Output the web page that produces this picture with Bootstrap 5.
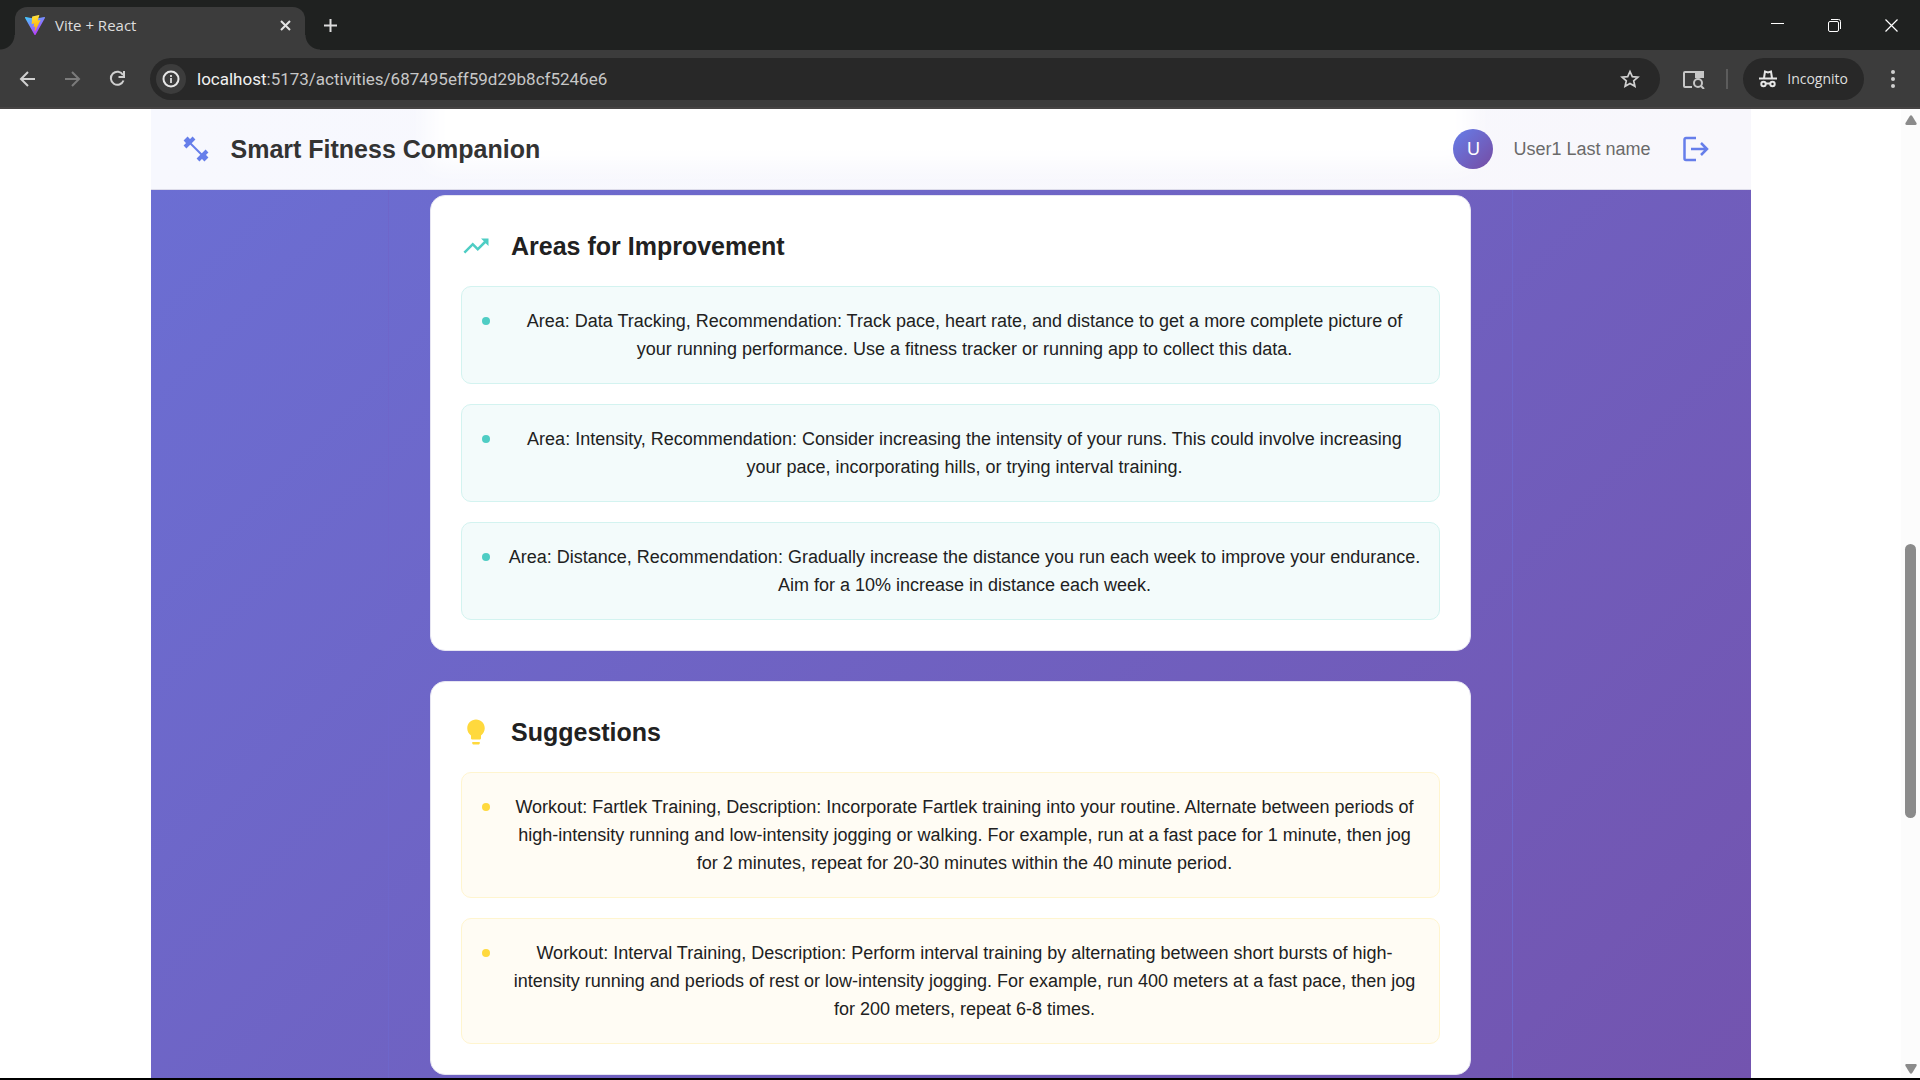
<!DOCTYPE html>
<html lang="en">
<head>
<meta charset="utf-8">
<meta name="viewport" content="width=device-width, initial-scale=1">
<title>Vite + React</title>
<link href="https://cdn.jsdelivr.net/npm/bootstrap@5.3.0/dist/css/bootstrap.min.css" rel="stylesheet">
<style>
  body { font-family: "Liberation Sans", Arial, sans-serif; font-size: 18px; line-height: 28px; color: #212121; background: #000; }
  svg { display: block; flex: none; }
  button { background: none; border: 0; padding: 0; color: inherit; }
  .screen { height: 100vh; border-bottom: 2px solid #000; }

  /* browser frame */
  .chrome { font-family: "Open Sans", "Noto Sans", sans-serif; color: #dedede; flex: none; }
  .tabstrip { height: 50px; background: #1f2120; padding-left: 15px; }
  .tab { width: 290px; height: 43px; background: #3c3c3c; border-radius: 12px 12px 0 0; padding: 0 12px 7px 10px; gap: 10px; font-size: 15px; line-height: 20px; position: relative; }
  .tab::before, .tab::after { content: ""; position: absolute; bottom: 0; width: 15px; height: 15px; }
  .tab::before { right: 100%; background: radial-gradient(circle at 0 0, #0000 14px, #3c3c3c 15px); }
  .tab::after { left: 100%; background: radial-gradient(circle at 100% 0, #0000 14px, #3c3c3c 15px); }
  .new-tab { margin: 0 0 0 18px; }
  .window-buttons { gap: 42px; padding-right: 21px; }
  .toolbar { height: 59px; background: #3c3c3c; border-bottom: 2px solid #464444; padding: 0 22px 0 18px; }
  .nav-buttons { gap: 25px; }
  .omnibox { height: 42px; background: #282828; border-radius: 21px; padding: 0 20px 0 6px; margin-left: 22px; }
  .site-info { width: 30px; height: 30px; background: #3c3c3c; }
  .address { font-family: Roboto, "Open Sans", sans-serif; color: #c7c7c7; font-size: 17px; line-height: 24px; padding-left: 11px; }
  .address b { font-weight: 400; color: #f0f0f0; }
  .side-search { margin: 0 21px 0 23px; }
  .separator { width: 2px; height: 20px; background: #5c5c5c; margin-right: 15px; }
  .incognito { height: 42px; background: #282828; border-radius: 21px; padding: 0 16px; gap: 10px; font-size: 14px; line-height: 20px; }

  /* page */
  .viewport { background: #fff; min-height: 0; }
  .app { max-width: 1600px; background: linear-gradient(135deg, #6b6fd4, #7354af); overflow: hidden; }
  .app-header { height: 81px; flex: none; background: linear-gradient(90deg, #f7f8fe, #f8f7fc); border-bottom: 1px solid #dddcea; padding: 0 30px; overflow: hidden; position: relative; }
  .app-header::before { content: ""; position: absolute; top: -40px; bottom: 24px; left: 0; right: 0; margin: auto; width: 1041px; background: #fff; filter: blur(12px); }
  .app-header > * { position: relative; }
  .brand { font-size: 25px; line-height: 40px; font-weight: 700; color: #333; gap: 20px; margin: 0; }
  .accent { color: #667eea; }
  .user { gap: 20px; color: #6a6a6a; }
  .avatar { width: 40px; height: 40px; background: linear-gradient(135deg, #667eea, #764ba2); color: #fff; }
  .logout { padding: 10px; }
  .content { width: 100%; max-width: 1125px; padding: 5px 41px 0; gap: 30px; border: solid #6e66ca; border-width: 0 1px; overflow: hidden; min-height: 0; }
  .panel { background: #fff; border: 1px solid #e6e5f2; border-radius: 15px; padding: 30px; flex: none; }
  .panel-title { font-size: 25px; line-height: 40px; font-weight: 700; gap: 20px; margin: 0 0 20px; }
  .tips { gap: 20px; margin: 0; }
  .tip { border: 1px solid; border-radius: 10px; padding: 20px 18px 20px 20px; gap: 18px; text-align: center; }
  .tip::before { content: ""; flex: none; width: 8px; height: 8px; border-radius: 50%; margin-top: 10px; background: currentColor; }
  .tip span { flex: 1; color: #212121; }
  .teal { color: #4ecdc4; }
  .teal .tip { background: #f3fbfb; border-color: #d3f3f0; }
  .sun { color: #ffd93d; }
  .sun .tip { background: #fffcf4; border-color: #fff5cf; }
  .scroll-rail { width: 19px; flex: none; background: #fcfcfc; padding: 6px 0 4px; color: #8b8b8b; }
  .thumb { width: 11px; border-radius: 6px; background: #8b8b8b; }
</style>
<script src="https://cdn.jsdelivr.net/npm/bootstrap@5.3.0/dist/js/bootstrap.bundle.min.js"></script>
</head>
<body>
<div class="screen d-flex flex-column overflow-hidden">
  <div class="chrome">
    <div class="tabstrip d-flex">
      <div class="tab d-flex align-items-center align-self-end">
        <svg width="20" height="20" viewBox="0 0 32 32" aria-hidden="true">
          <defs>
            <linearGradient id="v1" x1="0" y1="0" x2=".6" y2="1"><stop offset="0" stop-color="#41d1ff"/><stop offset="1" stop-color="#bd34fe"/></linearGradient>
            <linearGradient id="v2" x1=".4" y1="0" x2=".5" y2="1"><stop offset="0" stop-color="#ffea83"/><stop offset=".1" stop-color="#ffdd35"/><stop offset="1" stop-color="#ffa800"/></linearGradient>
          </defs>
          <path fill="url(#v1)" d="M31.9 4.7 16.9 31.500a1 1 0 0 1-1.800 0L.1 4.700a1 1 0 0 1 1-1.500L16 5.900l14.900-2.700a1 1 0 0 1 1 1.500z"/>
          <path fill="url(#v2)" d="M22.500.1 11.700 2.200a.5.5 0 0 0-.3.400l-.7 11.300a.4.4 0 0 0 .5.400l3-.7a.4.4 0 0 1 .5.500l-.9 4.400a.4.4 0 0 0 .5.500l1.900-.6a.4.4 0 0 1 .5.500l-1.400 6.900c-.1.400.5.700.7.300l8.600-17.500a.4.4 0 0 0-.5-.6l-3.200.6a.4.4 0 0 1-.4-.5L22.900.6a.4.4 0 0 0-.4-.5z"/>
        </svg>
        <span>Vite + React</span>
        <button class="ms-auto" aria-label="Close tab"><svg width="15" height="15" viewBox="0 0 15 15" stroke="#e3e3e3" stroke-width="2"><path d="M3 3l9 9M12 3l-9 9"/></svg></button>
      </div>
      <button class="new-tab" aria-label="New tab"><svg width="15" height="15" viewBox="0 0 15 15" stroke="#dcdcdc" stroke-width="2"><path d="M7.500 1v13M1 7.500h13"/></svg></button>
      <div class="window-buttons d-flex align-items-center ms-auto">
        <button aria-label="Minimize"><svg width="15" height="15" viewBox="0 0 15 15" stroke="#fff"><path d="M1 5.500h13"/></svg></button>
        <button aria-label="Restore"><svg width="15" height="15" viewBox="0 0 15 15" fill="none" stroke="#fff"><rect x="1.500" y="3.500" width="10" height="10" rx="1.500"/><path d="M4 1.500h7.500a2 2 0 0 1 2 2V11"/></svg></button>
        <button aria-label="Close"><svg width="15" height="15" viewBox="0 0 15 15" stroke="#fff" stroke-width="1.200"><path d="M1.500 1.500l12 12M13.500 1.500l-12 12"/></svg></button>
      </div>
    </div>
    <div class="toolbar d-flex align-items-center">
      <div class="nav-buttons d-flex">
        <button aria-label="Back"><svg width="20" height="20" viewBox="0 0 20 20" fill="none" stroke="#d0d0d0" stroke-width="2"><path d="M17 10H3M10 3l-7 7 7 7"/></svg></button>
        <button aria-label="Forward"><svg width="20" height="20" viewBox="0 0 20 20" fill="none" stroke="#7b7b7b" stroke-width="2"><path d="M2 10h14M9 3l7 7-7 7"/></svg></button>
        <button aria-label="Reload"><svg width="20" height="20" viewBox="0 0 20 20" fill="none" stroke="#d0d0d0" stroke-width="2"><path d="M15 6A6.500 6.500 0 1 0 15.500 11.500M16 2v6H10.500"/></svg></button>
      </div>
      <div class="omnibox d-flex align-items-center flex-grow-1">
        <button class="site-info rounded-circle d-flex align-items-center justify-content-center" aria-label="Site information"><svg width="18" height="18" viewBox="0 0 18 18" fill="none" stroke="#e6e6e6" stroke-width="2"><circle cx="9" cy="9" r="7.500"/><path d="M9 8v5M9 5v2" stroke-width="1.700"/></svg></button>
        <div class="address flex-grow-1" role="textbox" aria-label="Address"><b>localhost</b>:5173/activities/687495eff59d29b8cf5246e6</div>
        <button aria-label="Bookmark"><svg width="20" height="20" viewBox="0 0 20 20" fill="none" stroke="#d0d0d0" stroke-width="1.700"><path d="M10 2.500l2.300 5.100 5.600.5-4.200 3.700 1.200 5.500L10 14.400l-4.900 2.900 1.200-5.500L2.100 8.100l5.600-.5z"/></svg></button>
      </div>
      <button class="side-search" aria-label="Search side panel"><svg width="22" height="20" viewBox="0 0 22 20" fill="none" stroke="#c7c7c7" stroke-width="2"><path d="M9 18H2a1 1 0 0 1-1-1V4a1 1 0 0 1 1-1h18v5"/><path fill="#c7c7c7" stroke="none" d="M12 2h8a1 1 0 0 1 1 1v6h-9z"/><circle cx="15" cy="14" r="4"/><path d="M18 17l3 3"/></svg></button>
      <div class="separator"></div>
      <button class="incognito d-flex align-items-center" aria-label="Incognito"><svg width="18" height="20" viewBox="0 0 18 20" fill="none" stroke="#e6e6e6" stroke-width="2"><path d="M0 9.500h18M5 9l1-6.500 3 1 3-1L13 9"/><circle cx="4.500" cy="15" r="2.200"/><circle cx="13.500" cy="15" r="2.200"/><path d="M6.500 14.500h5"/></svg><span>Incognito</span></button>
      <button class="ms-4" aria-label="Menu"><svg width="10" height="20" viewBox="0 0 10 20" fill="#d0d0d0"><circle cx="5" cy="3" r="2"/><circle cx="5" cy="10" r="2"/><circle cx="5" cy="17" r="2"/></svg></button>
    </div>
  </div>

  <div class="viewport d-flex flex-grow-1">
    <div class="flex-grow-1 d-flex justify-content-center">
      <div class="app w-100 d-flex flex-column align-items-center">
        <header class="app-header w-100 d-flex align-items-center justify-content-between">
          <h1 class="brand d-flex align-items-center">
            <svg class="accent" width="30" height="30" viewBox="0 0 30 30" stroke="currentColor" fill="none" aria-hidden="true"><path stroke-width="2" d="M8 8l14 14"/><path stroke-width="4" d="M4 13L13 4M17 26l9-9"/><path stroke-width="4" d="M4 8l4-4M22 26l4-4"/></svg>
            <span>Smart Fitness Companion</span>
          </h1>
          <div class="user d-flex align-items-center">
            <div class="avatar rounded-circle d-flex align-items-center justify-content-center">U</div>
            <span>User1 Last name</span>
            <button class="logout accent" aria-label="Log out"><svg width="30" height="30" viewBox="0 0 30 30" fill="none" stroke="currentColor" stroke-width="2.500"><path d="M15 4H5a1.500 1.500 0 0 0-1.500 1.500v19A1.500 1.500 0 0 0 5 26h10M10 15h16M20 9l6 6-6 6"/></svg></button>
          </div>
        </header>
        <main class="content d-flex flex-column flex-grow-1">
          <section class="panel">
            <h2 class="panel-title d-flex align-items-center">
              <svg class="teal" width="30" height="30" viewBox="0 0 24 24" fill="currentColor" aria-hidden="true"><path d="m16 6 2.290 2.290-4.880 4.880-4-4L2 16.590 3.410 18l6-6 4 4 6.300-6.290L22 12V6z"/></svg>
              <span>Areas for Improvement</span>
            </h2>
            <ul class="tips teal list-unstyled d-flex flex-column">
              <li class="tip d-flex"><span>Area: Data Tracking, Recommendation: Track pace, heart rate, and distance to get a more complete picture of your running performance. Use a fitness tracker or running app to collect this data.</span></li>
              <li class="tip d-flex"><span>Area: Intensity, Recommendation: Consider increasing the intensity of your runs. This could involve increasing your pace, incorporating hills, or trying interval training.</span></li>
              <li class="tip d-flex"><span>Area: Distance, Recommendation: Gradually increase the distance you run each week to improve your endurance. Aim for a 10% increase in distance each week.</span></li>
            </ul>
          </section>
          <section class="panel">
            <h2 class="panel-title d-flex align-items-center">
              <svg class="sun" width="30" height="30" viewBox="0 0 24 24" fill="currentColor" aria-hidden="true"><path d="M9 21c0 .5.4 1 1 1h4c.6 0 1-.5 1-1v-1H9v1zm3-19C8.100 2 5 5.100 5 9c0 2.400 1.200 4.500 3 5.700V17c0 .5.4 1 1 1h6c.6 0 1-.5 1-1v-2.300c1.800-1.300 3-3.400 3-5.700 0-3.900-3.100-7-7-7z"/></svg>
              <span>Suggestions</span>
            </h2>
            <ul class="tips sun list-unstyled d-flex flex-column">
              <li class="tip d-flex"><span>Workout: Fartlek Training, Description: Incorporate Fartlek training into your routine. Alternate between periods of high-intensity running and low-intensity jogging or walking. For example, run at a fast pace for 1 minute, then jog for 2 minutes, repeat for 20-30 minutes within the 40 minute period.</span></li>
              <li class="tip d-flex"><span>Workout: Interval Training, Description: Perform interval training by alternating between short bursts of high-intensity running and periods of rest or low-intensity jogging. For example, run 400 meters at a fast pace, then jog for 200 meters, repeat 6-8 times.</span></li>
            </ul>
          </section>
        </main>
      </div>
    </div>
    <div class="scroll-rail d-flex flex-column align-items-center" aria-hidden="true">
      <svg width="12" height="10" viewBox="0 0 12 10" fill="currentColor"><path d="M4.800 1a1.500 1.500 0 0 1 2.400 0L11.500 8c.5 1 0 2-1 2h-9c-1 0-1.500-1-1-2z"/></svg>
      <div style="flex:419"></div><div class="thumb" style="flex:274"></div><div style="flex:246"></div>
      <svg width="12" height="10" viewBox="0 0 12 10" fill="currentColor"><path d="M4.800 9a1.500 1.500 0 0 0 2.400 0L11.500 2c.5-1 0-2-1-2h-9c-1 0-1.500 1-1 2z"/></svg>
    </div>
  </div>
</div>
</body>
</html>
